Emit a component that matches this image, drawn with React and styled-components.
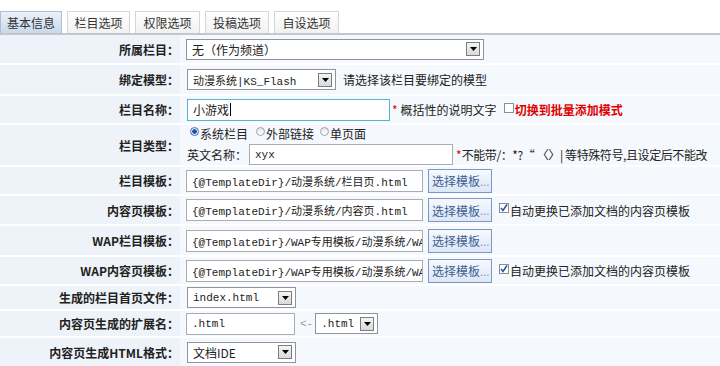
import React from 'react';
import styled, { createGlobalStyle } from 'styled-components';

const GlobalStyle = createGlobalStyle`
  body {
    margin: 0;
    background: #fff;
    font-family: "Noto Sans CJK SC", "Liberation Sans", sans-serif;
    font-size: 12px;
    color: #222;
  }
`;

const Page = styled.div`
  width: 720px;
  height: 366px;
  overflow: hidden;
  background: #fff;
`;

const TabBar = styled.div`
  display: flex;
  align-items: flex-end;
  gap: 5px;
  padding-top: 10px;
  height: 23px;
  border-bottom: 2px solid #c4c6c9;
`;

const Tab = styled.div`
  width: ${p => p.w}px;
  height: 22px;
  box-sizing: border-box;
  display: flex;
  align-items: center;
  justify-content: center;
  border: 1px solid ${p => (p.active ? '#a9bfd8' : '#d6d6d6')};
  border-bottom: none;
  background: ${p => (p.active ? 'linear-gradient(#eaf1f9, #c9d9ec)' : 'linear-gradient(#ffffff, #f1f1f1)')};
  color: #333;
  font-size: 12px;
`;

const Form = styled.div`
  display: flex;
  flex-direction: column;
  gap: 2px;
  background: #fff;
`;

const Row = styled.div`
  display: grid;
  grid-template-columns: 180px 1fr;
  height: ${p => p.h}px;
`;

const Label = styled.div`
  background: #eef3f9;
  display: flex;
  align-items: center;
  justify-content: flex-end;
  padding-right: 1px;
  font-weight: bold;
  color: #222;
  white-space: nowrap;
`;

const Cell = styled.div`
  background: #f5f8fc;
  display: flex;
  flex-direction: ${p => (p.column ? 'column' : 'row')};
  align-items: ${p => (p.column ? 'flex-start' : 'center')};
  justify-content: ${p => (p.column ? 'center' : 'flex-start')};
  gap: ${p => (p.column ? 2 : 0)}px;
  padding-left: ${p => p.pl ?? 6}px;
  white-space: nowrap;
  overflow: hidden;
`;

const Line = styled.div`
  display: flex;
  align-items: center;
`;

const Input = styled.div`
  width: ${p => p.w}px;
  height: ${p => p.h ?? 22}px;
  flex-shrink: 0;
  box-sizing: border-box;
  border: 1px solid ${p => (p.focus ? '#56b4d8' : '#a9adb2')};
  background: #fff;
  display: flex;
  align-items: center;
  padding-left: 5px;
  overflow: hidden;
  font-family: ${p => (p.cjk ? '"Noto Sans CJK SC", sans-serif' : '"Liberation Mono", "Noto Sans CJK SC", monospace')};
  font-size: ${p => (p.cjk ? 12 : 11)}px;
  color: #222;
  margin-left: ${p => p.ml ?? 0}px;
  white-space: nowrap;
`;

const Caret = styled.span`
  display: inline-block;
  width: 1px;
  height: 13px;
  background: #000;
  margin-left: 1px;
`;

const SelectBox = styled.div`
  width: ${p => p.w}px;
  height: 21px;
  flex-shrink: 0;
  box-sizing: border-box;
  border: 1px solid #8f959c;
  background: #fff;
  display: flex;
  align-items: center;
  padding: 0 3px 0 5px;
  margin-left: ${p => p.ml ?? 0}px;
  font-family: ${p => (p.cjk ? '"Noto Sans CJK SC", sans-serif' : '"Liberation Mono", "Noto Sans CJK SC", monospace')};
  font-size: ${p => (p.cjk ? 12 : 11)}px;
  color: #222;
`;

const SelectText = styled.span`
  flex: 1;
  overflow: hidden;
  white-space: nowrap;
`;

const Drop = styled.span`
  width: 14px;
  height: 14px;
  flex-shrink: 0;
  box-sizing: border-box;
  border: 1px solid #7d7d7d;
  background: linear-gradient(#f4f4f4, #d9d9d9);
  display: flex;
  align-items: center;
  justify-content: center;
`;

const Button = styled.div`
  width: 64px;
  height: 24px;
  flex-shrink: 0;
  box-sizing: border-box;
  margin-left: 5px;
  border: 1px solid #7b98c6;
  background: linear-gradient(#f6f9fe, #dce7f6);
  color: #3e5f92;
  display: flex;
  align-items: center;
  padding-left: 3px;
  font-size: 12px;
`;

const Dots = styled.span`
  color: #8a9ab5;
  font-size: 11px;
`;

const Hint = styled.span`
  color: ${p => (p.red ? '#e00000' : '#222')};
  font-weight: ${p => (p.bold ? 'bold' : 'normal')};
  margin-left: ${p => p.ml ?? 0}px;
  letter-spacing: ${p => p.ls ?? 0}px;
  font-size: 12px;
`;

const Check = styled.span`
  width: 10px;
  height: 10px;
  flex-shrink: 0;
  box-sizing: border-box;
  border: 1px solid #8a8f96;
  background: #fff;
  display: inline-flex;
  align-items: center;
  justify-content: center;
  margin-left: ${p => p.ml ?? 0}px;
  margin-right: 1px;
  transform: translateY(-2px);
`;

const Radio = styled.span`
  width: 9px;
  height: 9px;
  flex-shrink: 0;
  border-radius: 50%;
  box-sizing: border-box;
  border: 1px solid ${p => (p.on ? '#4170b8' : '#9aa2ad')};
  background: ${p => (p.on ? 'radial-gradient(circle, #1e4fa8 0 2px, #dfe9f7 2.5px)' : 'linear-gradient(#e2e6ea, #ffffff)')};
  display: inline-block;
  margin: 0 1px 0 ${p => p.ml ?? 0}px;
  transform: translateY(-2px);
`;

const Arrow = styled.span`
  color: #9a9a9a;
  margin: 0 2px 0 5px;
  font-family: "Liberation Mono", monospace;
  font-size: 11px;
`;

function DropArrow() {
  return (
    <Drop>
      <svg width="7" height="4" viewBox="0 0 7 4">
        <path d="M0 0H7L3.5 4Z" fill="#000" />
      </svg>
    </Drop>
  );
}

function Select({ w, ml, cjk, children }) {
  return (
    <SelectBox w={w} ml={ml} cjk={cjk}>
      <SelectText>{children}</SelectText>
      <DropArrow />
    </SelectBox>
  );
}

function CheckBox({ checked, ml }) {
  return (
    <Check ml={ml}>
      {checked && (
        <svg width="8" height="8" viewBox="0 0 8 8">
          <path d="M1 4L3 6.5L7 0.5" stroke="#2b55a8" strokeWidth="1.6" fill="none" />
        </svg>
      )}
    </Check>
  );
}

function TemplateRow({ label, value, h, auto }) {
  return (
    <Row h={h}>
      <Label>{label}</Label>
      <Cell>
        <Input w={237}>{value}</Input>
        <Button>
          选择模板<Dots>...</Dots>
        </Button>
        {auto && (
          <>
            <CheckBox checked ml={7} />
            <Hint>自动更换已添加文档的内容页模板</Hint>
          </>
        )}
      </Cell>
    </Row>
  );
}

const tabs = [
  { t: '基本信息', w: 62, active: true },
  { t: '栏目选项', w: 63 },
  { t: '权限选项', w: 65 },
  { t: '投稿选项', w: 64 },
  { t: '自设选项', w: 65 },
];

export default function App() {
  return (
    <Page>
      <GlobalStyle />
      <TabBar>
        {tabs.map(tab => (
          <Tab key={tab.t} w={tab.w} active={tab.active}>
            {tab.t}
          </Tab>
        ))}
      </TabBar>
      <Form>
        <Row h={28}>
          <Label>所属栏目：</Label>
          <Cell>
            <Select w={298} cjk>无（作为频道）</Select>
          </Cell>
        </Row>
        <Row h={29}>
          <Label>绑定模型：</Label>
          <Cell pl={7}>
            <Select w={149}>动漫系统|KS_Flash</Select>
            <Hint ml={7}>请选择该栏目要绑定的模型</Hint>
          </Cell>
        </Row>
        <Row h={27}>
          <Label>栏目名称：</Label>
          <Cell pl={7}>
            <Input w={203} focus cjk>
              小游戏<Caret />
            </Input>
            <Hint red ml={2}>*</Hint>
            <Hint ml={3}>概括性的说明文字</Hint>
            <CheckBox ml={7} />
            <Hint red bold>切换到批量添加模式</Hint>
          </Cell>
        </Row>
        <Row h={40}>
          <Label>栏目类型：</Label>
          <Cell column pl={7}>
            <Line>
              <Radio on ml={3} />
              <span>系统栏目</span>
              <Radio ml={8} />
              <span>外部链接</span>
              <Radio ml={6} />
              <span>单页面</span>
            </Line>
            <Line>
              <span>英文名称：</span>
              <Input w={204} h={21} ml={2}>xyx</Input>
              <Hint red ml={3}>*</Hint>
              <Hint ls={-0.4}>不能带/：*?“ 〈〉| 等特殊符号,且设定后不能改</Hint>
            </Line>
          </Cell>
        </Row>
        <TemplateRow h={27} label="栏目模板：" value="{@TemplateDir}/动漫系统/栏目页.html" />
        <TemplateRow h={28} label="内容页模板：" value="{@TemplateDir}/动漫系统/内容页.html" auto />
        <TemplateRow h={29} label="WAP栏目模板：" value="{@TemplateDir}/WAP专用模板/动漫系统/WAP栏目页.html" />
        <TemplateRow h={27} label="WAP内容页模板：" value="{@TemplateDir}/WAP专用模板/动漫系统/WAP内容页.html" auto />
        <Row h={23}>
          <Label>生成的栏目首页文件：</Label>
          <Cell pl={7}>
            <Select w={109}>index.html</Select>
          </Cell>
        </Row>
        <Row h={25}>
          <Label>内容页生成的扩展名：</Label>
          <Cell>
            <Input w={109}>.html</Input>
            <Arrow>&lt;-</Arrow>
            <Select w={63}>.html</Select>
          </Cell>
        </Row>
        <Row h={28}>
          <Label>内容页生成HTML格式：</Label>
          <Cell pl={7}>
            <Select w={109} cjk>文档IDE</Select>
          </Cell>
        </Row>
      </Form>
    </Page>
  );
}
